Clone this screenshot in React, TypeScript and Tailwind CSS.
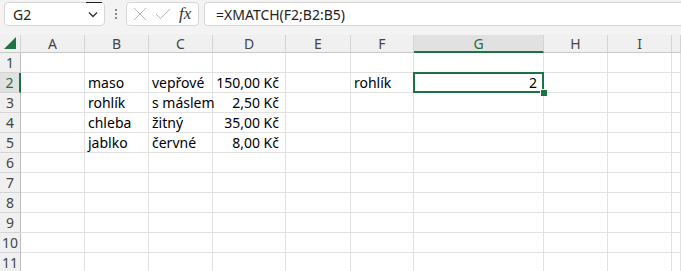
import React from 'react';

const cols = ['A', 'B', 'C', 'D', 'E', 'F', 'G', 'H', 'I', ''];

/**
 * Cell data, keyed by row then column index (0 = A)
 */
const data: Record<number, Record<number, { text: string; right?: boolean }>> = {
  2: { 1: { text: 'maso' }, 2: { text: 'vepřové' }, 3: { text: '150,00 Kč', right: true }, 5: { text: 'rohlík' }, 6: { text: '2', right: true } },
  3: { 1: { text: 'rohlík' }, 2: { text: 's máslem' }, 3: { text: '2,50 Kč', right: true } },
  4: { 1: { text: 'chleba' }, 2: { text: 'žitný' }, 3: { text: '35,00 Kč', right: true } },
  5: { 1: { text: 'jablko' }, 2: { text: 'červné' }, 3: { text: '8,00 Kč', right: true } },
};

const rows = [1, 2, 3, 4, 5, 6, 7, 8, 9, 10, 11];

const gridCols = 'grid-cols-[21px_64px_64px_64px_73px_65px_63px_130px_64px_64px_1fr]';

export default function App() {
  return (
    <div className="w-[681px] h-[271px] overflow-hidden bg-white text-black" style={{ fontFamily: '"Noto Sans", "Open Sans", sans-serif' }}>
      {/* Formula bar */}
      <div className="h-[35px] bg-[#f3f3f3] flex items-start pt-[2px] pl-[4px] gap-0">
        <div className="relative w-[101px] h-[24px] bg-white border border-[#d6d6d6] rounded-[4px] flex items-center pl-[8px] pr-[6px] justify-between">
          <span className="text-[14px] text-[#222]">G2</span>
          <svg width="10" height="7" viewBox="0 0 10 7" className="mt-[1px]">
            <path d="M1 1.5 L5 5.5 L9 1.5" stroke="#333" strokeWidth="1.4" fill="none" />
          </svg>
          <div className="absolute top-[-1px] right-[2px] w-[16px] h-[1px] bg-[#222]" />
        </div>
        <div className="w-[21px] h-[24px] flex flex-col items-center justify-center gap-[2px]">
          <span className="w-[2px] h-[2px] bg-[#8a8a8a]" />
          <span className="w-[2px] h-[2px] bg-[#8a8a8a]" />
          <span className="w-[2px] h-[2px] bg-[#8a8a8a]" />
        </div>
        <div className="w-[73px] h-[24px] bg-white border border-[#d6d6d6] rounded-[4px] flex items-center pl-[6px] gap-[8px]">
          <svg width="14" height="14" viewBox="0 0 14 14">
            <path d="M1 1 L13 13 M13 1 L1 13" stroke="#b5b5b5" strokeWidth="1" fill="none" />
          </svg>
          <svg width="16" height="12" viewBox="0 0 16 12">
            <path d="M1 6 L5.5 10.5 L15 1" stroke="#b5b5b5" strokeWidth="1" fill="none" />
          </svg>
          <span className="text-[17px] italic text-[#333] leading-none -mt-[2px]" style={{ fontFamily: '"Liberation Serif", serif' }}>fx</span>
        </div>
        <div className="ml-[5px] flex-1 h-[24px] bg-white border border-[#d6d6d6] border-r-0 rounded-l-[4px] flex items-center pl-[11px]">
          <span className="text-[14px] text-[#222]">=XMATCH(F2;B2:B5)</span>
        </div>
      </div>

      {/* Sheet */}
      <div className={`grid ${gridCols}`}>
        {/* Corner */}
        <div className="h-[18px] bg-[#f0f0f0] border-b border-[#c8c8c8] border-r border-r-[#d4d4d4] flex items-end justify-end pr-[4px] pb-[3px]">
          <svg width="12" height="12" viewBox="0 0 12 12">
            <path d="M12 0 L12 12 L0 12 Z" fill="#217346" />
          </svg>
        </div>
        {cols.map((c, i) => (
          <div
            key={c + i}
            className={
              c === 'G'
                ? 'h-[18px] bg-[#e1e1e1] border-b-2 border-[#1e7145] border-r border-r-[#d4d4d4] flex items-center justify-center text-[14px] text-[#1e6e42] leading-none pt-[1px]'
                : 'h-[18px] bg-[#f0f0f0] border-b border-[#c8c8c8] border-r border-r-[#d4d4d4] flex items-center justify-center text-[14px] text-[#444] leading-none'
            }
          >
            {c}
          </div>
        ))}

        {rows.map((r) => (
          <React.Fragment key={r}>
            <div
              className={
                r === 2
                  ? 'h-[20px] bg-[#e1e1e1] border-b border-[#d4d4d4] border-r-2 border-r-[#1e7145] flex items-center justify-center text-[14px] text-[#1e6e42] leading-none'
                  : 'h-[20px] bg-[#f0f0f0] border-b border-[#d4d4d4] border-r border-r-[#bdbdbd] flex items-center justify-center text-[14px] text-[#444] leading-none'
              }
            >
              {r}
            </div>
            {cols.map((c, i) => {
              const cell = data[r]?.[i];
              const selected = r === 2 && c === 'G';
              return (
                <div
                  key={c + i}
                  className={`relative h-[20px] border-b border-r border-[#e1e1e1] flex items-center text-[14px] leading-none whitespace-nowrap ${
                    cell?.right ? 'justify-end pr-[6px]' : 'pl-[3px]'
                  } ${selected ? 'z-10' : ''}`}
                >
                  {cell?.text}
                  {selected && (
                    <>
                      <div className="absolute left-[-1px] top-[-1px] right-[-1px] bottom-[-1px] border-2 border-[#1e7145] pointer-events-none" />
                      <div className="absolute right-[-4px] bottom-[-4px] w-[7px] h-[7px] bg-[#1e7145] border-l border-t border-white" />
                    </>
                  )}
                </div>
              );
            })}
          </React.Fragment>
        ))}
      </div>
    </div>
  );
}
